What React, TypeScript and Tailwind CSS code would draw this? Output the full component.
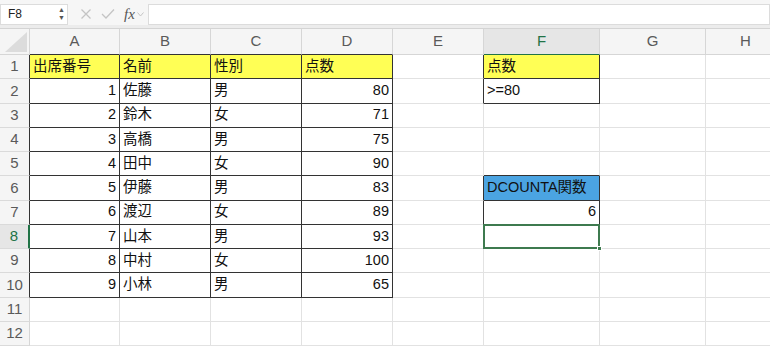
import React from 'react';

const COLS = [
  { k: 'A', w: 90 },
  { k: 'B', w: 91 },
  { k: 'C', w: 91 },
  { k: 'D', w: 91 },
  { k: 'E', w: 91 },
  { k: 'F', w: 116 },
  { k: 'G', w: 106 },
  { k: 'H', w: 80 },
];

type Cell = { v: string; align?: 'r'; bg?: string };

const DATA: Record<string, Cell> = {
  A1: { v: '出席番号', bg: 'y' },
  B1: { v: '名前', bg: 'y' },
  C1: { v: '性別', bg: 'y' },
  D1: { v: '点数', bg: 'y' },
  F1: { v: '点数', bg: 'y' },
  F2: { v: '>=80' },
  F6: { v: 'DCOUNTA関数', bg: 'b' },
  F7: { v: '6', align: 'r' },
};

const ROWS: [string, string, string, string][] = [
  ['1', '佐藤', '男', '80'],
  ['2', '鈴木', '女', '71'],
  ['3', '高橋', '男', '75'],
  ['4', '田中', '女', '90'],
  ['5', '伊藤', '男', '83'],
  ['6', '渡辺', '女', '89'],
  ['7', '山本', '男', '93'],
  ['8', '中村', '女', '100'],
  ['9', '小林', '男', '65'],
];
ROWS.forEach((r, i) => {
  const n = i + 2;
  DATA['A' + n] = { v: r[0], align: 'r' };
  DATA['B' + n] = { v: r[1] };
  DATA['C' + n] = { v: r[2] };
  DATA['D' + n] = { v: r[3], align: 'r' };
});

// bordered ranges (row 1-based, col 0-based)
function boxed(r: number, c: number) {
  if (r >= 1 && r <= 10 && c >= 0 && c <= 3) return true;
  if (c === 5 && (r === 1 || r === 2 || r === 6 || r === 7)) return true;
  return false;
}

const FONT = { fontFamily: '"Liberation Sans", "Noto Sans CJK JP", sans-serif' };

function TopBar() {
  return (
    <div className="flex h-[29px] items-center bg-[#f6f6f6] border-b border-[#d4d4d4] shadow-[inset_0_-3px_0_#ececec]">
      <div className="flex h-[21px] w-[68px] items-center justify-between bg-white border border-[#dcdcdc] pl-[7px] pr-[2px] text-[12px] text-[#222]">
        <span>F8</span>
        <span className="flex flex-col text-[7px] leading-[8px] text-[#555]">
          <span>▲</span>
          <span>▼</span>
        </span>
      </div>
      <div className="flex items-center gap-[9px] pl-[12px] pr-[4px] text-[#c8c8c8]">
        <svg width="12" height="12" viewBox="0 0 12 12">
          <path d="M1.5 1.5 L10.5 10.5 M10.5 1.5 L1.5 10.5" stroke="#c4c4c4" strokeWidth="1.3" />
        </svg>
        <svg width="14" height="12" viewBox="0 0 14 12">
          <path d="M1 6 L5 10 L13 1.5" stroke="#c4c4c4" strokeWidth="1.3" fill="none" />
        </svg>
        <span className="flex items-center gap-[2px]">
          <span className="text-[15px] italic text-[#555]" style={{ fontFamily: '"Liberation Serif", serif' }}>
            fx
          </span>
          <svg width="7" height="5" viewBox="0 0 7 5">
            <path d="M0.5 0.5 L3.5 4 L6.5 0.5" stroke="#c4c4c4" strokeWidth="1" fill="none" />
          </svg>
        </span>
      </div>
      <div className="h-[21px] flex-1 bg-white border border-[#dcdcdc]" />
    </div>
  );
}

export default function App() {
  const rowH = 'h-[24.25px]';
  return (
    <div className="h-[347px] w-[770px] overflow-hidden bg-white" style={FONT}>
      <TopBar />
      {/* column headers */}
      <div className="flex h-[26px] bg-[#f5f5f5]">
        <div
          className={
            'relative w-[30px] shrink-0 border-r border-b border-[#d6d6d6] ' + 'bg-[#f5f5f5]'
          }
        >
          <svg className="absolute right-[2px] bottom-[2px]" width="22" height="20" viewBox="0 0 22 20">
            <path d="M22 0 L22 20 L0 20 Z" fill="#dcdcdc" />
          </svg>
        </div>
        {COLS.map((c, i) => {
          const sel = c.k === 'F';
          const black = boxed(1, i);
          return (
            <div
              key={c.k}
              style={{ width: c.w }}
              className={
                'flex shrink-0 items-center justify-center border-r border-b text-[15px] ' +
                (sel
                  ? 'bg-[#e6e6e6] text-[#217346] border-b-[#217346] border-r-[#d6d6d6]'
                  : 'text-[#5a5a5a] border-r-[#d6d6d6] ' + (black ? 'border-b-[#333]' : 'border-b-[#d6d6d6]'))
              }
            >
              {c.k}
            </div>
          );
        })}
      </div>
      {Array.from({ length: 12 }, (_, ri) => {
        const r = ri + 1;
        const selRow = r === 8;
        return (
          <div key={r} className={'flex ' + rowH}>
            <div
              className={
                'flex w-[30px] shrink-0 items-center justify-center border-r border-b border-b-[#dadada] text-[15px] ' +
                (selRow
                  ? 'bg-[#e6e6e6] text-[#217346] border-r-[#217346] border-r-2'
                  : 'bg-[#f5f5f5] text-[#5a5a5a] ' + (boxed(r, 0) ? 'border-r-[#333]' : 'border-r-[#d6d6d6]'))
              }
            >
              {r}
            </div>
            {COLS.map((c, ci) => {
              const id = c.k + r;
              const d = DATA[id];
              const rb = boxed(r, ci) || boxed(r, ci + 1);
              const bb = boxed(r, ci) || boxed(r + 1, ci);
              const bg = d?.bg === 'y' ? 'bg-[#ffff55]' : d?.bg === 'b' ? 'bg-[#4ba4e2]' : 'bg-white';
              const selected = id === 'F8';
              return (
                <div
                  key={id}
                  style={{ width: c.w }}
                  className={
                    'relative flex shrink-0 items-center overflow-visible whitespace-nowrap border-r border-b px-[3px] text-[14.5px] text-[#111] ' +
                    bg +
                    ' ' +
                    (rb ? 'border-r-[#333] ' : 'border-r-[#e2e2e2] ') +
                    (bb ? 'border-b-[#333] ' : 'border-b-[#e2e2e2] ') +
                    (d?.align === 'r' ? 'justify-end' : 'justify-start')
                  }
                >
                  {d?.v}
                  {selected && (
                    <div className="absolute -left-[1px] -top-[1px] -right-[1px] -bottom-[1px] z-10 border-2 border-[#3e7a4f]">
                      <div className="absolute -right-[4px] -bottom-[4px] h-[5px] w-[5px] bg-[#3e7a4f] border border-white" />
                    </div>
                  )}
                </div>
              );
            })}
          </div>
        );
      })}
    </div>
  );
}
